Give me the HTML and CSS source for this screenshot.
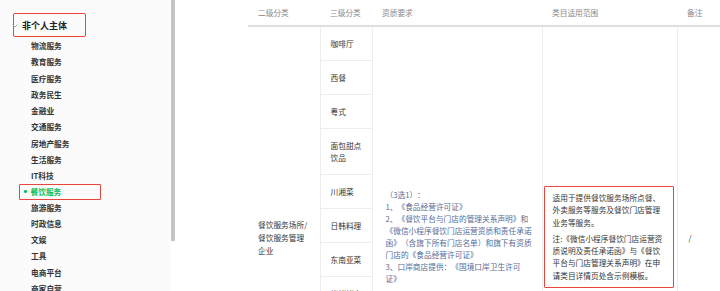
FILE: index.html
```html
<!DOCTYPE html>
<html lang="zh-CN">
<head>
  <meta charset="UTF-8" />
  <meta name="viewport" content="width=device-width, initial-scale=1.0" />
  <title>类目资质</title>
  <link rel="stylesheet" href="styles.css">
</head>

<body>
  <div class="page">
    <aside class="sidebar">
      <div class="group-title">
        <svg class="chevron" width="6" height="4" viewBox="0 0 6 4"><polyline points="0.5,0.5 3,3 5.5,0.5" fill="none" stroke="#aaa" stroke-width="1" /></svg>
        非个人主体
      </div>
      <ul class="menu">
        <li>物流服务</li>
        <li>教育服务</li>
        <li>医疗服务</li>
        <li>政务民生</li>
        <li>金融业</li>
        <li>交通服务</li>
        <li>房地产服务</li>
        <li>生活服务</li>
        <li>IT科技</li>
        <li class="active">餐饮服务</li>
        <li>旅游服务</li>
        <li>时政信息</li>
        <li>文娱</li>
        <li>工具</li>
        <li>电商平台</li>
        <li>商家自营</li>
      </ul>
    </aside>

    <div class="scrollbar"><div class="thumb"></div></div>

    <main class="content">
      <table class="qual-table">
        <colgroup>
          <col class="c1" />
          <col class="c2" />
          <col class="c3" />
          <col class="c4" />
          <col class="c5" />
        </colgroup>
        <thead>
          <tr>
            <th>二级分类</th>
            <th>三级分类</th>
            <th>资质要求</th>
            <th>类目适用范围</th>
            <th>备注</th>
          </tr>
        </thead>
        <tbody>
          <tr>
            <td class="cat">餐饮服务场所/餐饮服务管理企业</td>
            <td class="subs">
              <div class="sub">咖啡厅</div>
              <div class="sub">西餐</div>
              <div class="sub">粤式</div>
              <div class="sub">面包甜点饮品</div>
              <div class="sub">川湘菜</div>
              <div class="sub">日韩料理</div>
              <div class="sub">东南亚菜</div>
              <div class="sub">烧烤烤串</div>
              <div class="sub">火锅</div>
              <div class="sub">快餐小吃</div>
              <div class="sub">其他菜系</div>
              <div class="sub">酒吧</div>
            </td>
            <td class="req">（3选1）：<br>1、《食品经营许可证》<br>2、《餐饮平台与门店的管理关系声明》和《微信小程序餐饮门店运营资质和责任承诺函》（含旗下所有门店名单）和旗下有资质门店的《食品经营许可证》<br>3、口岸商店提供：《国境口岸卫生许可证》</td>
            <td class="scope">
              <div class="scope-box">
                <p>适用于提供餐饮服务场所点餐、外卖服务等服务及餐饮门店管理业务等服务。</p>
                <p>注:《微信小程序餐饮门店运营资质说明及责任承诺函》与《餐饮平台与门店管理关系声明》在申请类目详情页处含示例模板。</p>
              </div>
            </td>
            <td class="note">/</td>
          </tr>
        </tbody>
      </table>
    </main>
  </div>
</body>
</html>
```

FILE: styles.css
```css
body {
  margin: 0;
  font-family: "Noto Sans CJK SC", "Noto Sans", sans-serif;
  background: #fff;
  color: #333;
  text-spacing-trim: space-all;
}

.page {
  display: flex;
  width: 720px;
  height: 291px;
  overflow: hidden;
}

/* left menu */
.sidebar {
  flex: 0 0 171px;
  background: #fbfbfb;
  padding-top: 13px;
  box-sizing: border-box;
}

.group-title {
  display: flex;
  align-items: center;
  margin-left: 13px;
  width: 73px;
  height: 24px;
  box-sizing: border-box;
  border: 1.5px solid #e8453c;
  border-radius: 2px;
  font-size: 9px;
  font-weight: 700;
  color: #222;
}

.chevron {
  margin: 1px 4px 0 -2px;
}

.menu {
  list-style: none;
  margin: 0;
  padding: 1px 0 0;
}

.menu li {
  padding-left: 31px;
  font-size: 7.7px;
  font-weight: 700;
  line-height: 16.27px;
  color: #333;
}

.menu li.active {
  position: relative;
  margin-left: 19px;
  padding-left: 10.5px;
  width: 82px;
  box-sizing: border-box;
  border: 1.5px solid #e8453c;
  border-radius: 1px;
  line-height: 13.27px;
  color: #07c160;
}

.menu li.active::before {
  content: "";
  position: absolute;
  left: 4px;
  top: 5px;
  width: 2.5px;
  height: 2.5px;
  border-radius: 50%;
  background: #07c160;
}

.scrollbar {
  flex: 0 0 4px;
  background: #fff;
}

.thumb {
  width: 3.5px;
  height: 241px;
  background: #c4c4c4;
}

/* table */
.content {
  flex: 1;
  padding-left: 73px;
}

.qual-table {
  width: 472px;
  table-layout: fixed;
  border-collapse: collapse;
  font-size: 7.7px;
}

.c1 { width: 72px; }
.c2 { width: 52px; }
.c3 { width: 170px; }
.c4 { width: 135px; }
.c5 { width: 43px; }

.qual-table th {
  height: 25px;
  padding: 0 0 0 10px;
  text-align: left;
  font-weight: 400;
  color: #888;
  border-bottom: 2px solid #dfdfdf;
}

.qual-table td {
  vertical-align: middle;
  padding: 0 10px;
  line-height: 13px;
  color: #333;
}

.qual-table td.subs {
  padding: 0;
  border-left: 1px solid #ededed;
  border-right: 1px solid #ededed;
}

.sub {
  padding: 10.5px 10px;
  line-height: 12px;
  border-bottom: 1px solid #ededed;
}

.qual-table td.req {
  padding: 0 9px 0 13px;
  line-height: 12px;
  color: #576b95;
}

.qual-table td.scope {
  padding: 0 3px 0 1px;
  border-left: 1px solid #ededed;
  border-right: 1px solid #ededed;
}

.scope-box {
  border: 1.5px solid #e8453c;
  border-radius: 1px;
  padding: 4.5px 8px;
}

.scope-box p {
  margin: 0;
  line-height: 12.3px;
  color: #333;
}

.scope-box p + p {
  margin-top: 4px;
}

.qual-table td.note {
  padding-left: 11px;
}
```
